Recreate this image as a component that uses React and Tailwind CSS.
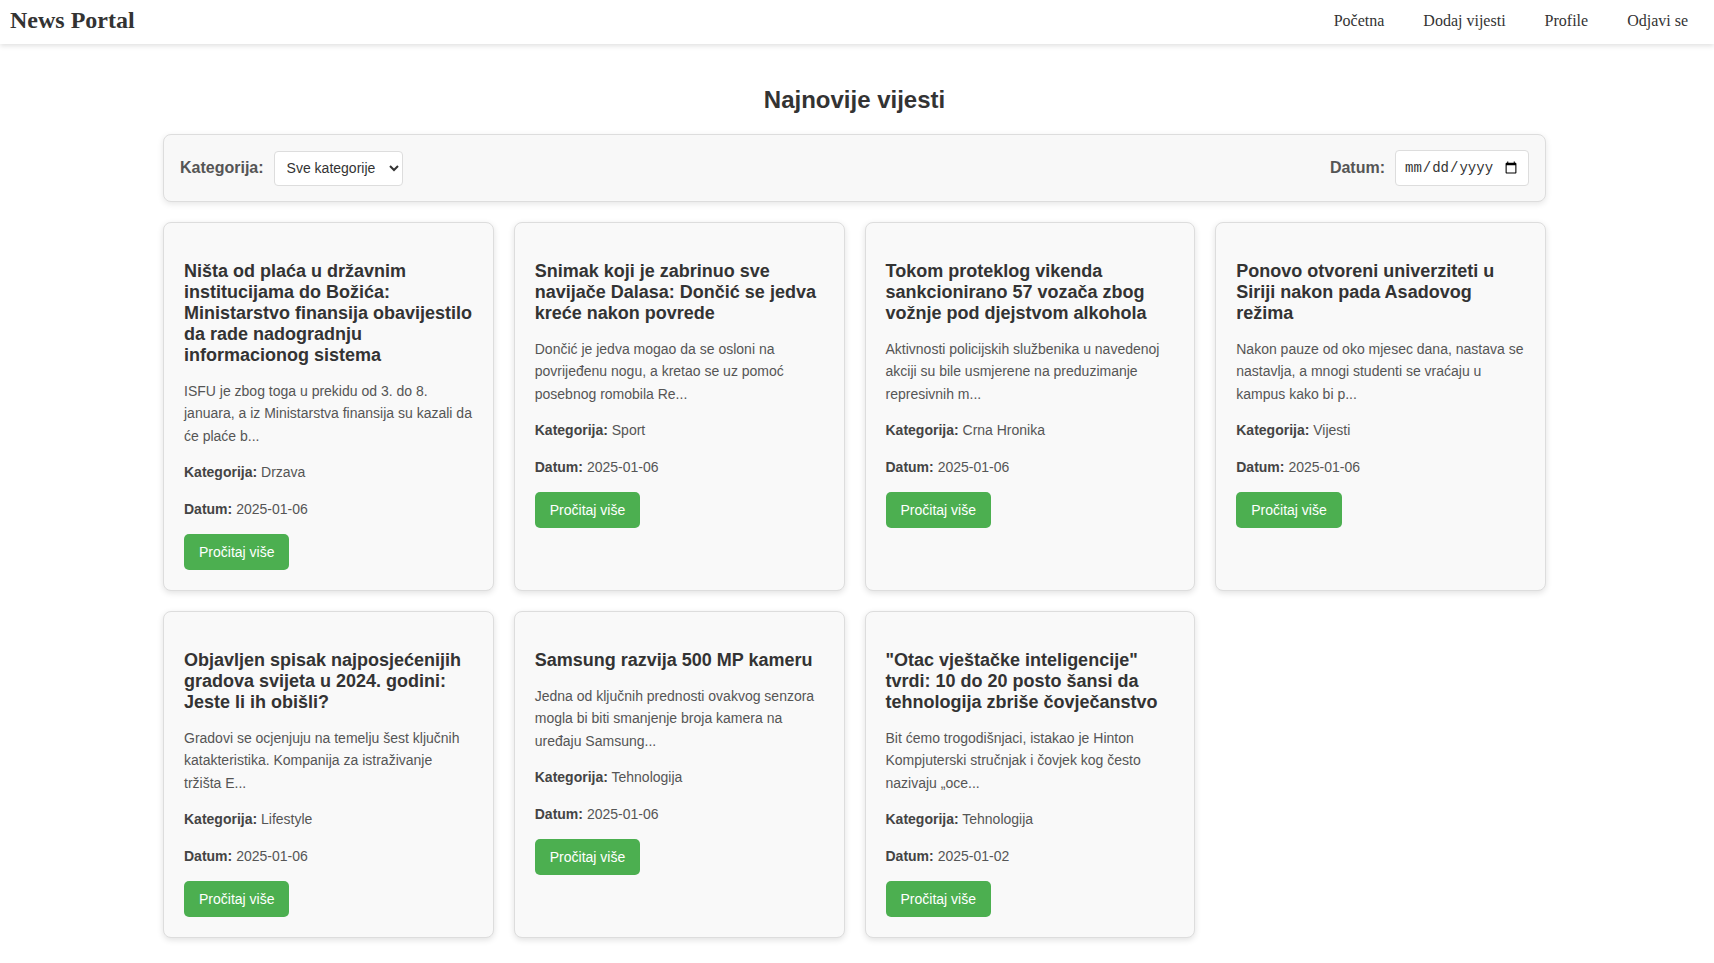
import React from 'react'

const NEWS = [
  {title:'Ništa od plaća u državnim institucijama do Božića: Ministarstvo finansija obavijestilo da rade nadogradnju informacionog sistema', text:'ISFU je zbog toga u prekidu od 3. do 8. januara, a iz Ministarstva finansija su kazali da će plaće b...', cat:'Drzava', date:'2025-01-06'},
  {title:'Snimak koji je zabrinuo sve navijače Dalasa: Dončić se jedva kreće nakon povrede', text:'Dončić je jedva mogao da se osloni na povrijeđenu nogu, a kretao se uz pomoć posebnog romobila Re...', cat:'Sport', date:'2025-01-06'},
  {title:'Tokom proteklog vikenda sankcionirano 57 vozača zbog vožnje pod djejstvom alkohola', text:'Aktivnosti policijskih službenika u navedenoj akciji su bile usmjerene na preduzimanje represivnih m...', cat:'Crna Hronika', date:'2025-01-06'},
  {title:'Ponovo otvoreni univerziteti u Siriji nakon pada Asadovog režima', text:'Nakon pauze od oko mjesec dana, nastava se nastavlja, a mnogi studenti se vraćaju u kampus kako bi p...', cat:'Vijesti', date:'2025-01-06'},
  {title:'Objavljen spisak najposjećenijih gradova svijeta u 2024. godini: Jeste li ih obišli?', text:'Gradovi se ocjenjuju na temelju šest ključnih katakteristika. Kompanija za istraživanje tržišta E...', cat:'Lifestyle', date:'2025-01-06'},
  {title:'Samsung razvija 500 MP kameru', text:'Jedna od ključnih prednosti ovakvog senzora mogla bi biti smanjenje broja kamera na uređaju Samsung...', cat:'Tehnologija', date:'2025-01-06'},
  {title:'"Otac vještačke inteligencije" tvrdi: 10 do 20 posto šansi da tehnologija zbriše čovječanstvo', text:'Bit ćemo trogodišnjaci, istakao je Hinton Kompjuterski stručnjak i čovjek kog često nazivaju „oce...', cat:'Tehnologija', date:'2025-01-02'},
]

function Navbar() {
  return (
    <nav className="h-[44px] bg-white flex items-center justify-between pl-[10px] pr-[26px] shadow-[0_2px_5px_rgba(0,0,0,0.12)] relative z-10">
      <span className="font-['Liberation_Serif',serif] font-bold text-[24px] text-[#333] leading-none -mt-[4px]">News Portal</span>
      <div className="flex items-center gap-[39px] font-['Liberation_Serif',serif] text-[16px] text-[#333] -mt-[2px]">
        {['Početna','Dodaj vijesti','Profile','Odjavi se'].map(l=>(
          <a key={l} href="#" className="hover:underline">{l}</a>
        ))}
      </div>
    </nav>
  )
}

function Filters() {
  return (
    <div className="flex items-center justify-between h-[68px] px-[16px] bg-[#f8f8f8] border border-[#ddd] rounded-[8px] shadow-[0_2px_6px_rgba(0,0,0,0.1)]">
      <div className="flex items-center gap-[10px]">
        <label className="font-bold text-[16px] text-[#555]">Kategorija:</label>
        <select className="h-[35px] w-[129px] px-[8px] text-[14px] text-[#333] bg-white border border-[#ddd] rounded-[4px]">
          <option>Sve kategorije</option>
        </select>
      </div>
      <div className="flex items-center gap-[10px]">
        <label className="font-bold text-[16px] text-[#555]">Datum:</label>
        <input type="date" className="h-[36px] w-[134px] px-[8px] font-['Liberation_Mono',monospace] text-[14px] text-[#333] bg-white border border-[#ddd] rounded-[4px]" />
      </div>
    </div>
  )
}

function NewsCard({n}) {
  return (
    <div className="bg-[#f9f9f9] border border-[#ddd] rounded-[8px] p-[20px] shadow-[0_2px_6px_rgba(0,0,0,0.12)]">
      <h3 className="mt-[18px] mb-[14px] text-[18px] leading-[21px] font-bold text-[#333]">{n.title}</h3>
      <p className="my-[14px] text-[14px] leading-[22.4px] text-[#555]">{n.text}</p>
      <p className="my-[14px] text-[14px] leading-[22.4px] text-[#555]"><strong className="text-[#444]">Kategorija:</strong> {n.cat}</p>
      <p className="my-[14px] text-[14px] leading-[22.4px] text-[#555]"><strong className="text-[#444]">Datum:</strong> {n.date}</p>
      <a href="#" className="inline-block bg-[#4caf50] text-white text-[14px] leading-[16px] px-[15px] py-[10px] rounded-[5px]">Pročitaj više</a>
    </div>
  )
}

export default function App() {
  return (
    <div className="min-h-screen bg-white font-['Liberation_Sans',Arial,sans-serif]">
      <Navbar/>
      <main className="w-[1383px] ml-[163px]">
        <h2 className="text-center text-[24px] leading-[28px] font-bold text-[#333] mt-[42px] mb-[20px]">Najnovije vijesti</h2>
        <Filters/>
        <div className="grid grid-cols-4 gap-[20px] mt-[20px] pb-[20px]">
          {NEWS.map((n,i)=>(<NewsCard key={i} n={n}/>))}
        </div>
      </main>
    </div>
  )
}
